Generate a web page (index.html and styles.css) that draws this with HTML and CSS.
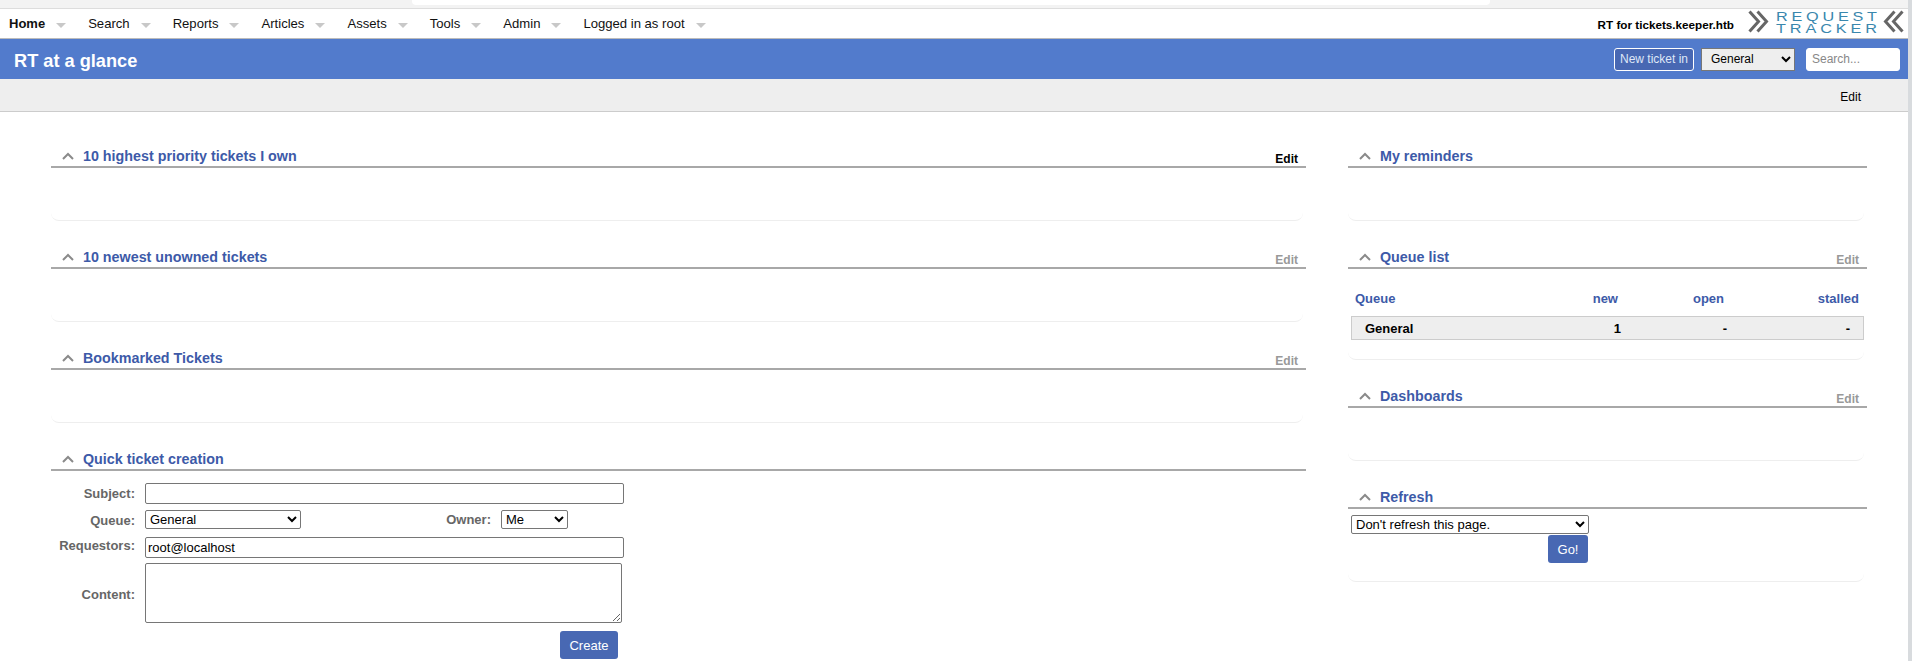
FILE: index.html
```html
<!DOCTYPE html>
<html lang="en">
<head>
<meta charset="utf-8">
<title>RT at a glance</title>
<link rel="stylesheet" href="styles.css">
</head>
<body>
<div class="page">
  <div class="topstrip"><div class="topstrip-tab"></div></div>
  <header class="navbar">
    <nav class="menu">
      <a class="menu-item active">Home<i class="caret"></i></a>
      <a class="menu-item">Search<i class="caret"></i></a>
      <a class="menu-item">Reports<i class="caret"></i></a>
      <a class="menu-item">Articles<i class="caret"></i></a>
      <a class="menu-item">Assets<i class="caret"></i></a>
      <a class="menu-item">Tools<i class="caret"></i></a>
      <a class="menu-item">Admin<i class="caret"></i></a>
      <a class="menu-item">Logged in as root<i class="caret"></i></a>
    </nav>
    <div class="brand">
      <span class="brand-name">RT for tickets.keeper.htb</span>
      <svg class="logo" width="157" height="29" viewBox="0 0 157 29">
        <g fill="none" stroke="#666" stroke-width="3">
          <path d="M2.5 2.5l9 10-9 10M10.5 2.5l9 10-9 10"/>
          <path d="M155.5 2.5l-9 10 9 10M147.5 2.5l-9 10 9 10"/>
        </g>
        <text class="logo-text" transform="translate(29 12) scale(1.3 1)" textLength="77.7">REQUEST</text>
        <text class="logo-text" transform="translate(29 24) scale(1.3 1)" textLength="77.7">TRACKER</text>
      </svg>
    </div>
  </header>
  <div class="titlebar">
    <h1 class="page-title">RT at a glance</h1>
    <div class="title-tools">
      <button class="new-ticket">New ticket in</button>
      <select class="queue-select"><option>General</option></select>
      <input class="search" placeholder="Search...">
    </div>
  </div>
  <div class="subbar"><a class="subbar-edit">Edit</a></div>
  <main class="columns">
    <div class="col col-left">
      <section class="box">
        <div class="box-head">
          <svg class="chev" width="12" height="8" viewBox="0 0 12 8"><path d="M1 7l5-5 5 5"/></svg>
          <h2 class="box-title">10 highest priority tickets I own</h2>
          <a class="box-edit hot">Edit</a>
        </div>
        <div class="box-body empty"></div>
      </section>
      <section class="box">
        <div class="box-head">
          <svg class="chev" width="12" height="8" viewBox="0 0 12 8"><path d="M1 7l5-5 5 5"/></svg>
          <h2 class="box-title">10 newest unowned tickets</h2>
          <a class="box-edit">Edit</a>
        </div>
        <div class="box-body empty"></div>
      </section>
      <section class="box">
        <div class="box-head">
          <svg class="chev" width="12" height="8" viewBox="0 0 12 8"><path d="M1 7l5-5 5 5"/></svg>
          <h2 class="box-title">Bookmarked Tickets</h2>
          <a class="box-edit">Edit</a>
        </div>
        <div class="box-body empty"></div>
      </section>
      <section class="box">
        <div class="box-head">
          <svg class="chev" width="12" height="8" viewBox="0 0 12 8"><path d="M1 7l5-5 5 5"/></svg>
          <h2 class="box-title">Quick ticket creation</h2>
        </div>
        <form class="quick">
          <label class="lbl">Subject:</label>
          <input class="field wide" type="text">
          <label class="lbl">Queue:</label>
          <div class="queue-row">
            <select class="sel sel-queue"><option>General</option></select>
            <label class="lbl owner-lbl">Owner:</label>
            <select class="sel sel-owner"><option>Me</option></select>
          </div>
          <label class="lbl lbl-up">Requestors:</label>
          <input class="field wide" type="text" value="root@localhost">
          <label class="lbl lbl-down">Content:</label>
          <textarea class="content"></textarea>
          <div class="create-row"><button type="button" class="btn btn-create">Create</button></div>
        </form>
      </section>
    </div>
    <div class="col col-right">
      <section class="box">
        <div class="box-head">
          <svg class="chev" width="12" height="8" viewBox="0 0 12 8"><path d="M1 7l5-5 5 5"/></svg>
          <h2 class="box-title">My reminders</h2>
        </div>
        <div class="box-body empty"></div>
      </section>
      <section class="box">
        <div class="box-head">
          <svg class="chev" width="12" height="8" viewBox="0 0 12 8"><path d="M1 7l5-5 5 5"/></svg>
          <h2 class="box-title">Queue list</h2>
          <a class="box-edit">Edit</a>
        </div>
        <div class="box-body queues">
          <div class="q-row q-head">
            <span class="q-name">Queue</span><span class="q-num q-new">new</span><span class="q-num q-open">open</span><span class="q-num q-stalled">stalled</span>
          </div>
          <div class="q-row q-data">
            <span class="q-name">General</span><span class="q-num q-new">1</span><span class="q-num q-open">-</span><span class="q-num q-stalled">-</span>
          </div>
        </div>
      </section>
      <section class="box">
        <div class="box-head">
          <svg class="chev" width="12" height="8" viewBox="0 0 12 8"><path d="M1 7l5-5 5 5"/></svg>
          <h2 class="box-title">Dashboards</h2>
          <a class="box-edit">Edit</a>
        </div>
        <div class="box-body empty"></div>
      </section>
      <section class="box">
        <div class="box-head">
          <svg class="chev" width="12" height="8" viewBox="0 0 12 8"><path d="M1 7l5-5 5 5"/></svg>
          <h2 class="box-title">Refresh</h2>
        </div>
        <div class="box-body refresh">
          <select class="sel sel-refresh"><option>Don't refresh this page.</option></select>
          <button type="button" class="btn btn-go">Go!</button>
        </div>
      </section>
    </div>
  </main>
</div>
<div class="scrollbar"></div>
</body>
</html>
```
FILE: styles.css
```css
* { box-sizing: border-box; }
html, body { margin: 0; height: 100%; overflow: hidden; }
body {
  display: flex;
  font-family: "Liberation Sans", Arial, sans-serif;
  font-size: 13px;
  color: #000;
  background: #fff;
}
.page { flex: 1; min-width: 0; }
.scrollbar { width: 4px; background: #d8dbde; }

.topstrip { height: 9px; background: #f3f3f3; border-bottom: 1px solid #ddd; padding-left: 412px; padding-right: 418px; }
.topstrip-tab { height: 5px; background: #fff; border-radius: 0 0 4px 4px; }

.navbar {
  height: 30px;
  display: flex;
  justify-content: space-between;
  background: #fff;
  border-bottom: 1px solid #bbb;
}
.menu { display: flex; padding-left: 9px; align-items: center; height: 29px; font-size: 13.1px; }
.menu-item { display: flex; align-items: center; margin-right: 22px; color: #111; }
.menu-item.active { font-weight: bold; font-size: 13px; }
.caret {
  width: 0; height: 0; margin-left: 11px; margin-top: 4px;
  border-left: 5px solid transparent;
  border-right: 5px solid transparent;
  border-top: 5px solid #c8c8c8;
}
.brand { display: flex; align-items: flex-start; padding-right: 4px; }
.brand-name { font-weight: bold; font-size: 11.7px; line-height: 14px; margin-top: 9px; margin-right: 13px; }
.logo { display: block; }
.logo-text { font-family: "Liberation Sans", Arial, sans-serif; font-size: 12.5px; fill: #3a87ad; }

.titlebar {
  height: 40px;
  background: #527bcc;
  display: flex;
  justify-content: space-between;
  align-items: center;
  padding: 0 8px 0 14px;
}
.page-title { margin: 4px 0 0; color: #fff; font-size: 18.2px; font-weight: bold; }
.title-tools { display: flex; align-items: center; }
.new-ticket {
  width: 80px; height: 23px; padding: 0;
  background: #4868b3;
  border: 1px solid #fff;
  border-radius: 3px;
  color: #dfe7f7;
  font: 12px "Liberation Sans", Arial, sans-serif;
  margin-right: 7px;
}
.queue-select {
  width: 94px; height: 23px;
  background: #eee;
  border: 1px solid #777;
  font: 12px "Liberation Sans", Arial, sans-serif;
  padding-left: 5px;
  margin-right: 11px;
}
.search {
  width: 94px; height: 23px;
  border: 1px solid #fff;
  border-radius: 3px;
  padding: 0 5px;
  font: 12px "Liberation Sans", Arial, sans-serif;
}
.search::placeholder { color: #888; }

.subbar {
  height: 33px;
  background: #eee;
  border-bottom: 1px solid #ccc;
  display: flex;
  justify-content: flex-end;
  align-items: center;
  padding: 0 47px 0 0;
}
.subbar-edit { font-size: 12px; margin-top: 3px; }

.columns {
  display: flex;
  padding: 31px 41px 0 51px;
  gap: 42px;
}
.col-left { width: 1255px; }
.col-right { flex: 1; min-width: 0; }
.box { margin-bottom: 23px; }
.box-head {
  height: 25px;
  display: flex;
  align-items: center;
  padding: 2px 8px 0 11px;
  border-bottom: 2px solid #a8a8a8;
}
.chev { margin-right: 9px; display: block; flex: none; }
.chev path { fill: none; stroke: #8a8a8a; stroke-width: 2; }
.box-title { margin: 0; flex: 1; font-size: 14.3px; font-weight: bold; color: #3d5aa8; }
.box-edit { font-size: 12px; font-weight: bold; color: #999; margin-top: 6px; }
.box-edit.hot { color: #000; }
.box-body {
  margin-right: 3px;
  border-bottom: 1px solid #eee;
  border-radius: 0 0 8px 8px;
}
.empty { height: 53px; }

.quick {
  display: grid;
  grid-template-columns: 84px 1fr;
  column-gap: 10px;
  padding-top: 12px;
  align-items: center;
}
.lbl { text-align: right; font-weight: bold; color: #666; white-space: nowrap; }
.lbl-up { margin-bottom: 4px; }
.lbl-down { margin-top: 8px; }
.field { width: 479px; height: 21px; border: 1px solid #767676; border-radius: 2px; padding: 0 2px; font: 13px "Liberation Sans", Arial, sans-serif; }
.wide { display: block; }
.sel { height: 19px; border: 1px solid #767676; border-radius: 2px; background: #fff; font: 13px "Liberation Sans", Arial, sans-serif; }
.queue-row { display: flex; align-items: center; margin: 6px 0 8px; }
.sel-queue { width: 156px; }
.owner-lbl { width: 190px; }
.sel-owner { width: 67px; margin-left: 10px; }
.content { display: block; width: 477px; height: 60px; margin-top: 5px; border: 1px solid #767676; border-radius: 2px; }
.create-row { grid-column: 2; margin: 8px 0 0 415px; }
.btn { background: #4868b3; color: #fff; border: 0; border-radius: 3px; padding: 0; font: 13px "Liberation Sans", Arial, sans-serif; }
.btn-create { width: 58px; height: 28px; display: block; }

.queues { padding: 21px 0 19px 3px; }
.q-row { display: flex; width: 513px; align-items: center; }
.q-head { color: #3d5aa8; font-weight: bold; height: 26px; padding: 0 0 9px 4px; }
.q-data { height: 24px; background: #eee; border: 1px solid #ccc; font-weight: bold; padding-left: 13px; }
.q-name { flex: none; width: 205px; }
.q-num { flex: none; text-align: right; }
.q-new { width: 58px; }
.q-open { width: 106px; }
.q-stalled { width: 135px; }
.q-data .q-new { width: 51px; }
.q-data .q-open { width: 106px; }
.q-data .q-stalled { width: 123px; }

.refresh { padding: 6px 0 18px 3px; display: flex; flex-direction: column; align-items: flex-start; }
.sel-refresh { width: 238px; height: 19px; }
.btn-go { width: 40px; height: 28px; margin: 1px 0 0 197px; }
```
